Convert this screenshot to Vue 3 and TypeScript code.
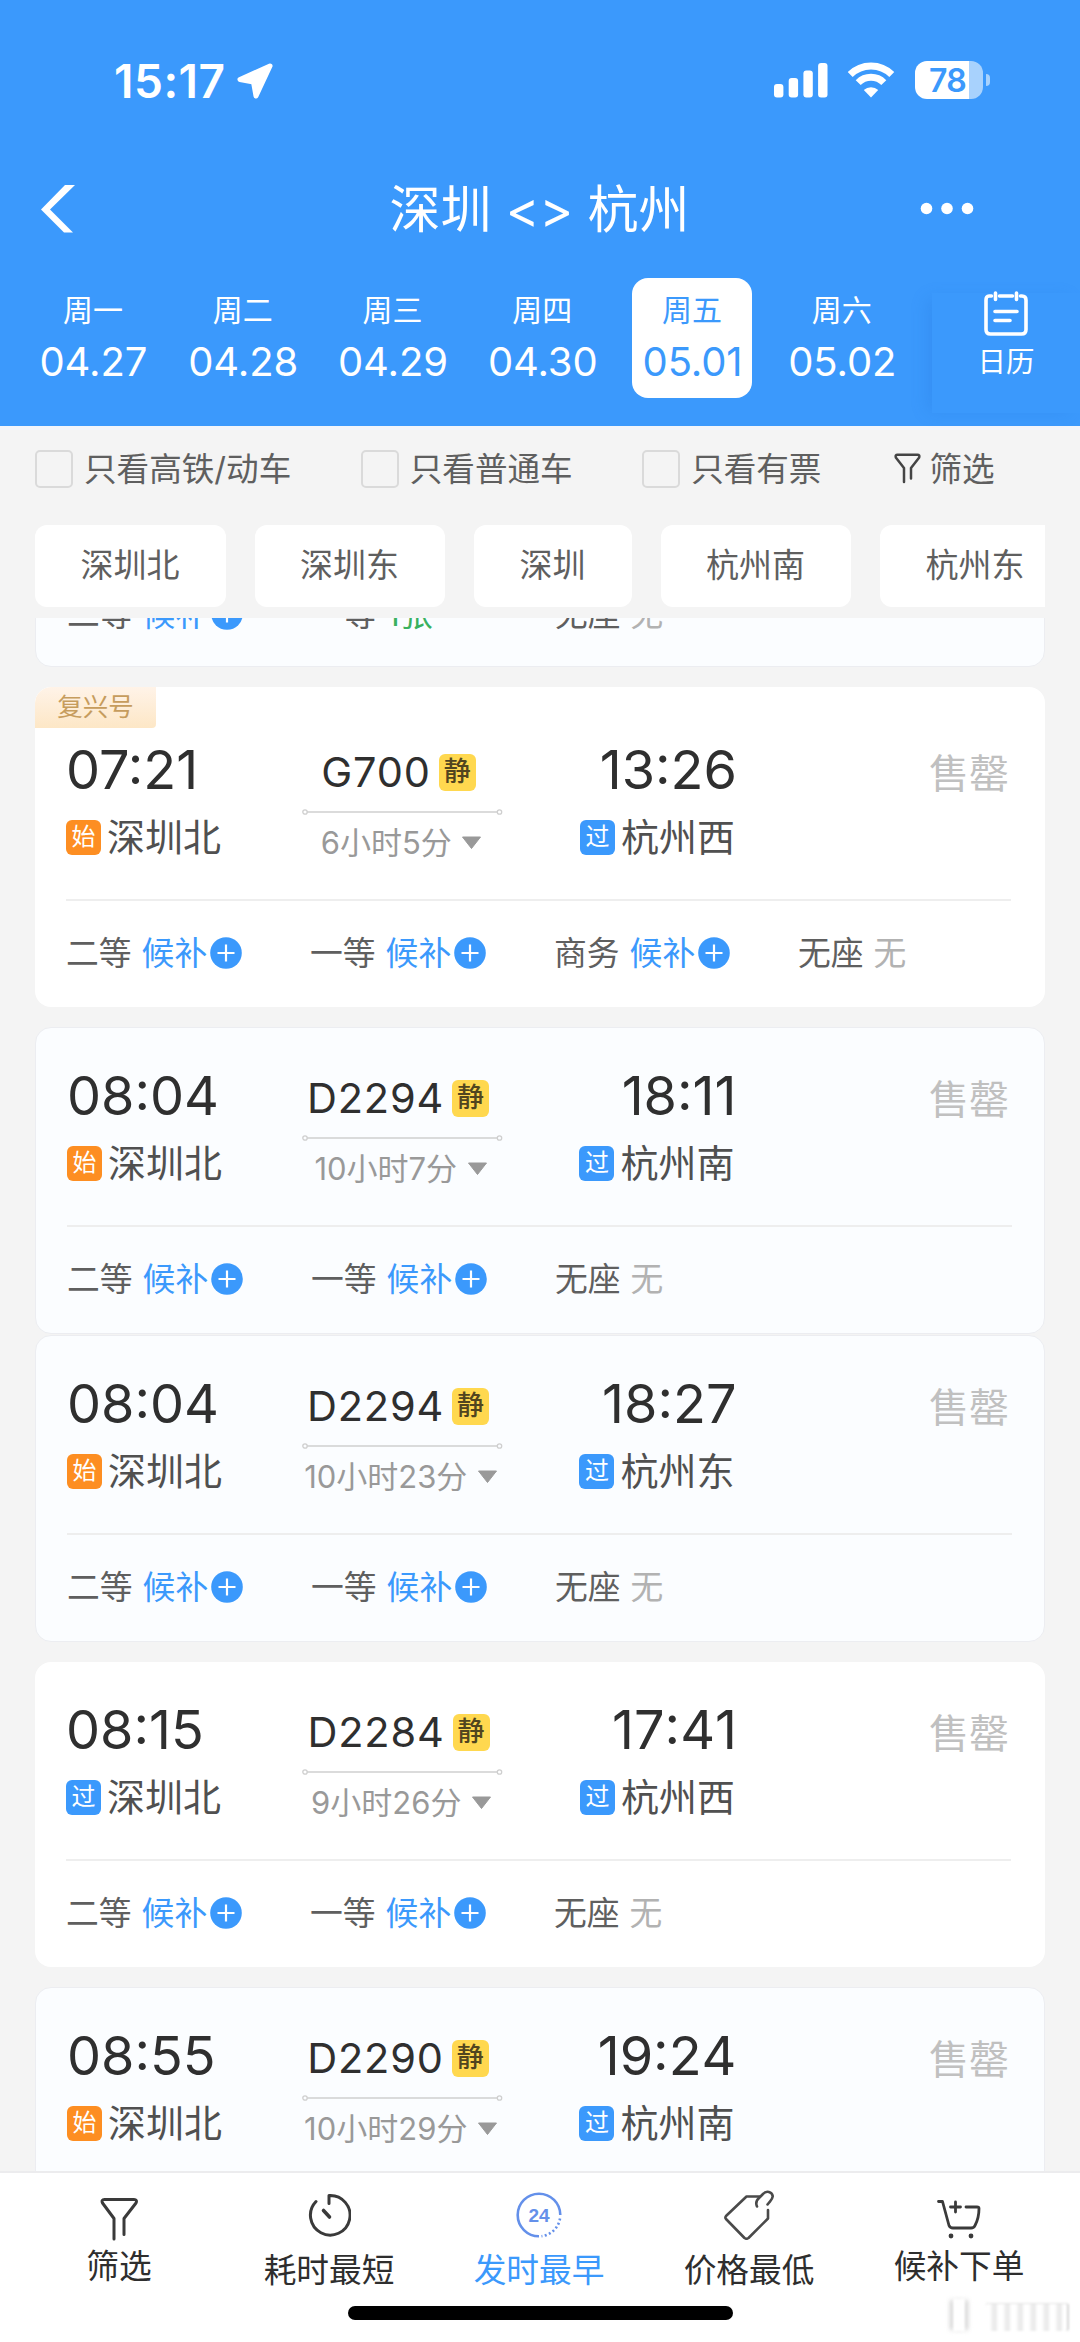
<script setup lang="ts">
interface Day {
  week: string
  date: string
  active?: boolean
}

interface Seat {
  name: string
  state: 'wait' | 'none' | 'left'
  text: string
}

interface Train {
  depart: string
  arrive: string
  fromTag: '始' | '过'
  from: string
  to: string
  code: string
  duration: string
  seats: Seat[]
  fuxing?: boolean
  tinted?: boolean
  joined?: boolean
}

const days: Day[] = [
  { week: '周一', date: '04.27' },
  { week: '周二', date: '04.28' },
  { week: '周三', date: '04.29' },
  { week: '周四', date: '04.30' },
  { week: '周五', date: '05.01', active: true },
  { week: '周六', date: '05.02' },
]

const toggles = ['只看高铁/动车', '只看普通车', '只看有票']
const stations = ['深圳北', '深圳东', '深圳', '杭州南', '杭州东']

const wait = (name: string): Seat => ({ name, state: 'wait', text: '候补' })
const none = (name: string): Seat => ({ name, state: 'none', text: '无' })

const previousSeats: Seat[] = [wait('二等'), { name: '一等', state: 'left', text: '1张' }, none('无座')]

const trains: Train[] = [
  {
    depart: '07:21', arrive: '13:26', fromTag: '始', from: '深圳北', to: '杭州西', code: 'G700', duration: '6小时5分',
    seats: [wait('二等'), wait('一等'), wait('商务'), none('无座')], fuxing: true,
  },
  {
    depart: '08:04', arrive: '18:11', fromTag: '始', from: '深圳北', to: '杭州南', code: 'D2294', duration: '10小时7分',
    seats: [wait('二等'), wait('一等'), none('无座')], tinted: true, joined: true,
  },
  {
    depart: '08:04', arrive: '18:27', fromTag: '始', from: '深圳北', to: '杭州东', code: 'D2294', duration: '10小时23分',
    seats: [wait('二等'), wait('一等'), none('无座')], tinted: true,
  },
  {
    depart: '08:15', arrive: '17:41', fromTag: '过', from: '深圳北', to: '杭州西', code: 'D2284', duration: '9小时26分',
    seats: [wait('二等'), wait('一等'), none('无座')],
  },
  {
    depart: '08:55', arrive: '19:24', fromTag: '始', from: '深圳北', to: '杭州南', code: 'D2290', duration: '10小时29分',
    seats: [], tinted: true,
  },
]
</script>

<template>
  <div class="screen">
    <header class="header">
      <div class="status">
        <div class="clock">
          <span>15:17</span>
          <svg width="38" height="38" viewBox="0 0 38 38">
            <path d="M34 4 L4 17.5 L17.5 20 L20 34 Z" fill="#fff" stroke="#fff" stroke-width="5" stroke-linejoin="round" />
          </svg>
        </div>
        <div class="signals">
          <svg width="54" height="36" viewBox="0 0 54 36" fill="#fff">
            <rect x="0" y="22" width="9.4" height="13.5" rx="3" />
            <rect x="14.7" y="16" width="9.4" height="19.5" rx="3" />
            <rect x="29.4" y="8.5" width="9.4" height="27" rx="3" />
            <rect x="44.1" y="1" width="9.4" height="34.5" rx="3" />
          </svg>
          <svg class="wifi" width="48" height="36" viewBox="0 0 48 36" fill="none" stroke="#fff" stroke-width="7">
            <path d="M3.2 12.5 A29.5 29.5 0 0 1 44.8 12.5" />
            <path d="M11.2 20.6 A18 18 0 0 1 36.8 20.6" />
            <path d="M24 35.5 L16.8 28 A10.5 10.5 0 0 1 31.2 28 Z" fill="#fff" stroke="none" />
          </svg>
          <div class="battery"><span>78</span></div>
          <i class="nub"></i>
        </div>
      </div>

      <div class="nav">
        <svg class="back" width="36" height="48" viewBox="0 0 36 48">
          <path d="M24 0 H34 L9 24.5 L32 47.5 H23 L0 24.5 Z" fill="#fff" />
        </svg>
        <h1>深圳 &lt;&gt; 杭州</h1>
        <svg class="more" width="54" height="14" viewBox="0 0 54 14" fill="#fff">
          <circle cx="6.5" cy="6.5" r="5.8" /><circle cx="27" cy="6.5" r="5.8" /><circle cx="47.5" cy="6.5" r="5.8" />
        </svg>
      </div>

      <div class="days">
        <div class="strip">
          <div v-for="day in days" :key="day.date" class="day" :class="{ active: day.active }">
            <span class="week">{{ day.week }}</span>
            <span class="date">{{ day.date }}</span>
          </div>
        </div>
        <div class="calendar">
          <svg width="46" height="46" viewBox="0 0 46 46" fill="none" stroke="#fff" stroke-width="3.6" stroke-linecap="round">
            <path d="M8.5 5 H6 Q3 5 3 9 V38.5 Q3 43 7.5 43 H38.5 Q43 43 43 38.5 V9 Q43 5 39 5 H37.5 M16.5 5 H29.5" />
            <path d="M12.5 2 V8.5 M33.5 2 V8.5 M12 20.5 H34 M12 29.5 H27" />
          </svg>
          <span>日历</span>
        </div>
      </div>
    </header>

    <div class="filters">
      <label v-for="text in toggles" :key="text" class="toggle"><i class="box"></i>{{ text }}</label>
      <div class="filter">
        <svg width="27" height="31" viewBox="0 0 27 31" fill="none" stroke="#444" stroke-width="2.5" stroke-linejoin="round" stroke-linecap="round">
          <path d="M10 29 V15 L1.8 4.5 Q1 1.8 3.5 1.8 H23.5 Q26 1.8 25.2 4.5 L17 15 V25.5" />
        </svg>
        <span>筛选</span>
      </div>
    </div>

    <div class="chips">
      <span v-for="name in stations" :key="name" class="chip">{{ name }}</span>
    </div>

    <main class="list">
      <section class="card tinted previous">
        <div class="seats">
          <div v-for="seat in previousSeats" :key="seat.name" class="seat">
            <span>{{ seat.name }}</span>
            <span :class="seat.state">{{ seat.text }}</span>
            <svg v-if="seat.state === 'wait'" class="plus" width="32" height="32" viewBox="0 0 32 32">
              <circle cx="16" cy="16" r="15.8" fill="#3b99fc" />
              <path d="M7.5 16 H24.5 M16 7.5 V24.5" stroke="#fff" stroke-width="2.2" />
            </svg>
          </div>
        </div>
      </section>

      <section
        v-for="(train, index) in trains"
        :key="index"
        class="card"
        :class="{ tinted: train.tinted, joined: train.joined, fuxing: train.fuxing }"
      >
        <span v-if="train.fuxing" class="ribbon">复兴号</span>
        <div class="journey">
          <div class="end depart">
            <span class="time">{{ train.depart }}</span>
            <span class="station">
              <i class="tag" :class="{ origin: train.fromTag === '始' }">{{ train.fromTag }}</i>{{ train.from }}
            </span>
          </div>
          <div class="middle">
            <div class="code"><span>{{ train.code }}</span><i class="quiet">静</i></div>
            <svg class="route" width="202" height="8" viewBox="0 0 202 8" fill="none" stroke="#cfcfcf">
              <path d="M5 4 H195" stroke-width="1.5" />
              <circle cx="3" cy="4" r="2.2" stroke-width="1.3" />
              <circle cx="197.5" cy="4" r="2.2" stroke-width="1.3" />
            </svg>
            <div class="duration">
              {{ train.duration }}
              <svg width="21" height="14" viewBox="0 0 21 14">
                <path d="M1.5 1 H19.5 L10.5 12.5 Z" fill="#999" stroke="#999" stroke-linejoin="round" />
              </svg>
            </div>
          </div>
          <div class="end arrive">
            <span class="time">{{ train.arrive }}</span>
            <span class="station"><i class="tag">过</i>{{ train.to }}</span>
          </div>
          <span class="sold">售罄</span>
        </div>
        <div v-if="train.seats.length" class="seats">
          <div v-for="seat in train.seats" :key="seat.name" class="seat">
            <span>{{ seat.name }}</span>
            <span :class="seat.state">{{ seat.text }}</span>
            <svg v-if="seat.state === 'wait'" class="plus" width="32" height="32" viewBox="0 0 32 32">
              <circle cx="16" cy="16" r="15.8" fill="#3b99fc" />
              <path d="M7.5 16 H24.5 M16 7.5 V24.5" stroke="#fff" stroke-width="2.2" />
            </svg>
          </div>
        </div>
      </section>
    </main>

    <footer class="tabs">
      <div class="tab high">
        <div class="icon">
          <svg width="38" height="44" viewBox="0 0 38 44" fill="none" stroke="#3a3a3a" stroke-width="3" stroke-linecap="round" stroke-linejoin="round">
            <path d="M14 42 V21.5 L2.5 6 Q1 2.5 4.5 2.5 H34 Q37.5 2.5 36 6 L24 21.5 V37.5" />
          </svg>
        </div>
        <span>筛选</span>
      </div>
      <div class="tab">
        <div class="icon">
          <svg width="44" height="44" viewBox="0 0 44 44" fill="none" stroke="#3a3a3a" stroke-width="3" stroke-linecap="round">
            <path d="M22 10.5 V2.5 A19.8 19.8 0 1 1 9 8.5" stroke-linejoin="round" />
            <path d="M16.5 17.5 L22.5 24" stroke-width="3.6" />
          </svg>
        </div>
        <span>耗时最短</span>
      </div>
      <div class="tab current">
        <div class="icon">
          <svg width="46" height="46" viewBox="0 0 46 46" fill="none" stroke="#6490ea" stroke-width="2.6">
            <path d="M23 44.3 A21.3 21.3 0 1 1 44.3 23" />
            <path d="M44 26.5 A21.3 21.3 0 0 1 25.5 44.2" stroke-dasharray="2 2.4" />
            <text x="23" y="29.7" text-anchor="middle" font-family="Liberation Sans" font-size="19" font-weight="700" fill="#6490ea" stroke="none">24</text>
          </svg>
        </div>
        <span>发时最早</span>
      </div>
      <div class="tab">
        <div class="icon">
          <svg width="50" height="50" viewBox="0 0 50 50" fill="none" stroke="#4a4a4a" stroke-width="2.6" stroke-linecap="round" stroke-linejoin="round">
            <path d="M35.5 6.5 H22.5 L2 26 Q.8 27.500 2 29 L20.5 48 Q22.5 49.500 24.5 48 L44 28.5 V20" />
            <path d="M33 16.5 C31.2 12.500 32.500 10 35.500 7.500 L39 4 C42.500 0 48 2 48.700 6 C49 9 46.500 10.500 43.500 14.500" />
          </svg>
        </div>
        <span>价格最低</span>
      </div>
      <div class="tab high">
        <div class="icon">
          <svg width="44" height="40" viewBox="0 0 44 40" fill="none" stroke="#3a3a3a" stroke-width="2.8" stroke-linecap="round" stroke-linejoin="round">
            <path d="M1.5 2.5 H5.5 L12 26.5 Q13 29 16 29 H34 Q37 29 38 26.5 Q42 19 42 9.5 Q42 8 40 8 H29" />
            <path d="M18.5 3 V13 M13.5 8 H23.5" />
            <circle cx="14" cy="37" r="2.4" fill="#3a3a3a" stroke="none" />
            <circle cx="34" cy="37" r="2.4" fill="#3a3a3a" stroke="none" />
          </svg>
        </div>
        <span>候补下单</span>
      </div>
      <i class="home"></i>
      <div class="smudge"><i></i><b></b></div>
    </footer>
  </div>
</template>

<style>
body {
  margin: 0;
}
</style>

<style scoped>
.screen {
  width: 1080px;
  height: 2342px;
  overflow: hidden;
  display: flex;
  flex-direction: column;
  background: #f4f4f4;
  color: #5f5f5f;
  font-family: Inter, "Noto Sans CJK SC", sans-serif;
}
i {
  font-style: normal;
}
svg {
  display: block;
  flex: none;
}
.header {
  height: 426px;
  flex: none;
  background: #3b99fc;
  color: #fff;
  box-shadow: 0 4px 0 #f2f5fb;
}
.status {
  height: 160px;
  display: flex;
  justify-content: space-between;
  align-items: center;
  padding: 0 90px 0 114px;
  box-sizing: border-box;
}
.clock {
  display: flex;
  align-items: center;
  gap: 10px;
  padding-top: 1px;
  font-size: 46px;
  font-weight: 600;
  letter-spacing: 0.5px;
}
.signals {
  display: flex;
  align-items: center;
}
.wifi {
  margin: 0 20px 0 19px;
}
.battery {
  width: 68px;
  height: 38px;
  border-radius: 12px;
  background: linear-gradient(90deg, #fff 54px, #a8d2fd 54px);
  color: #3b99fc;
  font-size: 32px;
  font-weight: 600;
  line-height: 39px;
  box-sizing: border-box;
  padding-left: 14px;
  letter-spacing: -0.8px;
}
.nub {
  width: 4px;
  height: 12px;
  margin-left: 3px;
  border-radius: 0 5px 5px 0;
  background: #a8d2fd;
}
.nav {
  height: 98px;
  display: flex;
  align-items: center;
  justify-content: space-between;
  padding: 0 106px 0 41px;
}
h1 {
  margin: 2px 0 0 82px;
  font-size: 51px;
  font-weight: 400;
  line-height: 96px;
}
.days {
  height: 168px;
  display: flex;
}
.strip {
  width: 932px;
  box-sizing: border-box;
  padding: 20px 0 0 18px;
  display: flex;
}
.day {
  width: 120px;
  height: 120px;
  margin: 0 14.9px;
  flex: none;
  display: flex;
  flex-direction: column;
  align-items: center;
  border-radius: 16px;
}
.day.active {
  background: #fff;
  color: #3b99fc;
}
.week {
  margin-top: 12px;
  font-size: 30px;
  line-height: 40px;
}
.date {
  margin: 7px 0 0 1px;
  font-size: 40px;
  line-height: 49px;
  letter-spacing: -0.1px;
}
.calendar {
  width: 148px;
  height: 120px;
  margin-top: 35px;
  display: flex;
  flex-direction: column;
  align-items: center;
  box-shadow: -8px 2px 16px -4px rgba(30, 110, 215, 0.22);
}
.calendar svg {
  margin-top: -2px;
}
.calendar span {
  margin-top: 5px;
  font-size: 28.5px;
  line-height: 40px;
}
.filters {
  height: 85px;
  flex: none;
  box-sizing: border-box;
  padding: 0 35px;
  display: flex;
  align-items: center;
  font-size: 32.6px;
  line-height: 40px;
}
.toggle {
  display: flex;
  align-items: center;
  margin-right: 69.5px;
}
.box {
  width: 38px;
  height: 38px;
  box-sizing: border-box;
  border: 2px solid #dadada;
  border-radius: 5px;
  margin-right: 11px;
}
.filter {
  display: flex;
  align-items: center;
  gap: 8px;
  margin-left: 3.5px;
}
.chips {
  height: 107px;
  flex: none;
  margin: 0 35px;
  padding-top: 14px;
  box-sizing: border-box;
  display: flex;
  gap: 29px;
  overflow: hidden;
}
.chip {
  flex: none;
  height: 82px;
  padding: 0 46px 0 45.5px;
  background: #fff;
  border-radius: 12px;
  font-size: 33px;
  line-height: 81px;
}
.list {
  flex: 1;
  min-height: 0;
  overflow: hidden;
  padding: 0 35px;
  display: flex;
  flex-direction: column;
}
.card {
  position: relative;
  flex: none;
  height: 305px;
  margin-bottom: 20px;
  box-sizing: border-box;
  padding: 0 31px;
  border-radius: 16px;
  background: #fff;
  overflow: hidden;
}
.card.tinted {
  height: 307px;
  border: 1px solid #ecedf1;
  padding: 0 30px 0 31px;
  background: #fbfdff;
}
.card.joined {
  margin-bottom: 1px;
}
.card.fuxing {
  height: 320px;
  padding-top: 15px;
}
.card.previous {
  height: 107px;
  margin-top: -58px;
}
.previous .seats {
  border-top: 0;
}
.ribbon {
  position: absolute;
  left: 0;
  top: 0;
  width: 121px;
  height: 41px;
  border-radius: 16px 0 4px 0;
  background: linear-gradient(#fff3e8, #fde7c6);
  color: #c69c5d;
  font-size: 25.5px;
  line-height: 39px;
  text-align: center;
}
.journey {
  height: 197px;
  box-sizing: border-box;
  display: flex;
}
.end {
  padding-top: 38px;
  display: flex;
  flex-direction: column;
}
.depart {
  width: 236px;
}
.tinted .depart {
  width: 234.5px;
}
.arrive {
  width: 233px;
  align-items: flex-end;
}
.time {
  font-size: 54px;
  line-height: 60px;
  color: #2f2f2f;
}
.arrive .time {
  font-kerning: none;
}
.station {
  margin-top: 16.5px;
  display: flex;
  align-items: center;
  font-size: 38px;
  line-height: 41px;
  color: #505050;
}
.arrive .station {
  margin-right: 2px;
}
.tag {
  width: 35px;
  height: 35px;
  margin-right: 6px;
  border-radius: 6px;
  background: #3b99fc;
  color: #fff;
  font-size: 24px;
  line-height: 34px;
  text-align: center;
}
.tag.origin {
  background: #fd8e22;
}
.middle {
  width: 202px;
  padding-top: 51px;
  display: flex;
  flex-direction: column;
  align-items: center;
}
.code {
  display: flex;
  align-items: center;
  gap: 8px;
  margin-right: 9px;
  font-size: 41.5px;
  letter-spacing: 0.8px;
  line-height: 38px;
  color: #2f2f2f;
}
.quiet {
  width: 37px;
  height: 37px;
  border-radius: 6px;
  background: #ffd84f;
  color: #51451f;
  font-size: 27px;
  font-weight: 500;
  letter-spacing: 0;
  line-height: 36px;
  text-align: center;
}
.route {
  margin-top: 17px;
}
.duration {
  margin: 7px 3px 0 0;
  display: flex;
  align-items: center;
  gap: 9.5px;
  font-size: 31px;
  line-height: 40px;
  color: #999;
  white-space: nowrap;
}
.sold {
  flex: 1;
  padding: 52px 5px 0 0;
  text-align: right;
  font-size: 40px;
  line-height: 40px;
  color: #c0c0c0;
}
.seats {
  height: 108px;
  box-sizing: border-box;
  padding-bottom: 3px;
  display: grid;
  grid-template-columns: repeat(4, 244px);
  align-items: center;
  border-top: 2px solid #eee;
  width: 945px;
}
.seat {
  display: flex;
  align-items: center;
  font-size: 32.8px;
  line-height: 40px;
}
.seat span + span {
  margin-left: 10px;
}
.wait {
  color: #3b99fc;
}
.left {
  color: #39b15f;
}
.none {
  color: #b2b2b2;
}
.plus {
  margin-left: 3px;
}
.tabs {
  position: relative;
  height: 171px;
  flex: none;
  box-sizing: border-box;
  border-top: 2px solid #ececee;
  padding: 0 14px;
  display: flex;
  background: #fff;
  color: #2e2e2e;
  font-size: 32.7px;
}
.tab {
  width: 210px;
  display: flex;
  flex-direction: column;
  align-items: center;
}
.tab .icon {
  height: 77px;
  box-sizing: border-box;
  padding-top: 7px;
  display: flex;
  align-items: center;
}
.tab span {
  line-height: 40px;
}
.tab.high .icon {
  height: 73px;
}
.tab.high svg {
  margin-top: 11px;
}
.tab.current {
  color: #3b99fc;
}
.home {
  position: absolute;
  left: 348px;
  bottom: 22px;
  width: 385px;
  height: 14px;
  border-radius: 7px;
  background: #000;
}
.smudge {
  position: absolute;
  right: 11px;
  bottom: 11px;
  display: flex;
  align-items: flex-end;
  gap: 20px;
  filter: blur(1px);
}
.smudge i {
  width: 12px;
  height: 32px;
  background: #fff;
  box-shadow: -4px 0 4px -1px #d4d4d4, 4px 0 4px -1px #d4d4d4;
}
.smudge b {
  width: 82px;
  height: 27px;
  border-radius: 3px;
  border-top: 1px solid #e4e4e4;
  border-right: 2px solid #d4d4d4;
  background: repeating-linear-gradient(90deg, #fff 0 5px, #ebebeb 8px 11px, #fff 13px);
}
</style>
